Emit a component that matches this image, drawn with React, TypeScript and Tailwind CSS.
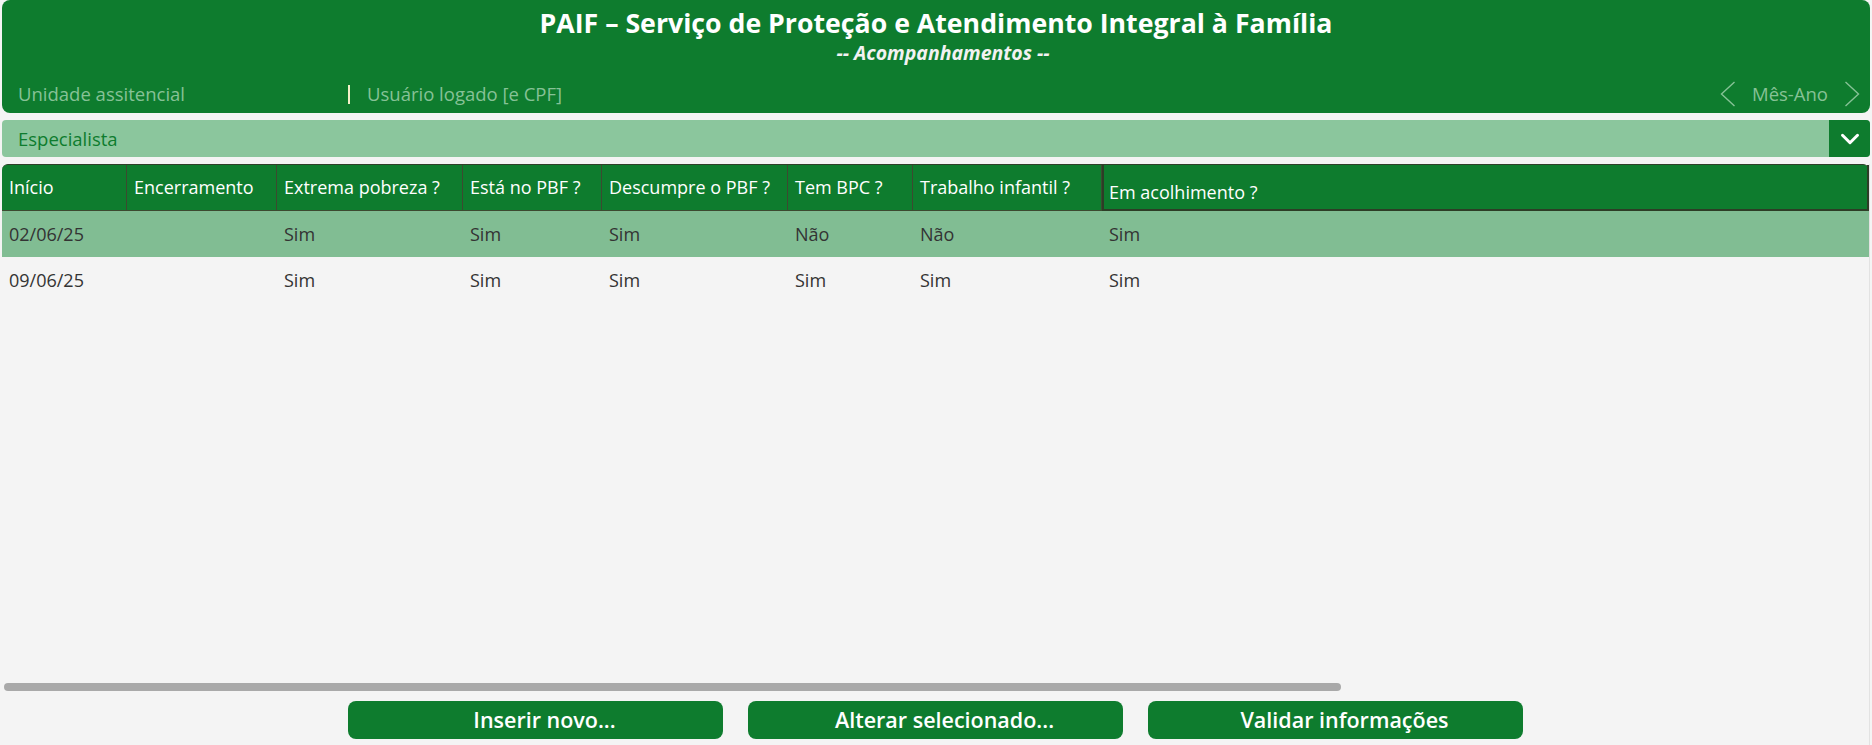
import { ChevronDown } from "lucide-react";

// Tela de acompanhamentos do PAIF (cabeçalho, filtro, grade e ações).
const columns = [
  "Início",
  "Encerramento",
  "Extrema pobreza ?",
  "Está no PBF ?",
  "Descumpre o PBF ?",
  "Tem BPC ?",
  "Trabalho infantil ?",
  "Em acolhimento ?",
];

const rows = [
  ["02/06/25", "", "Sim", "Sim", "Sim", "Não", "Não", "Sim"],
  ["09/06/25", "", "Sim", "Sim", "Sim", "Sim", "Sim", "Sim"],
];

const grid = "grid grid-cols-[125px_150px_186px_139px_186px_125px_189px_1fr]";

function Arrow({ dir }: { dir: "left" | "right" }) {
  return (
    <svg width="16" height="26" viewBox="0 0 16 26" fill="none" aria-hidden>
      <path
        d={dir === "left" ? "M14.5 1L1.5 13l13 12" : "M1.5 1l13 12-13 12"}
        stroke="currentColor"
        strokeWidth="1.4"
      />
    </svg>
  );
}

export default function App() {
  return (
    <div
      className="flex h-[745px] w-[1872px] flex-col overflow-hidden bg-[#f4f4f4] px-[2px]"
      style={{ fontFamily: "'Open Sans', 'Liberation Sans', sans-serif" }}
    >
      <header className="flex h-[113px] flex-col rounded-[8px] bg-[#0e7c2e] px-[16px]">
        <h1 className="pt-[5px] text-center text-[26.7px] font-bold leading-[35px] text-white">
          PAIF – Serviço de Proteção e Atendimento Integral à Família
        </h1>
        <div className="pl-[14px] text-center text-[19.5px] font-bold italic leading-[26px] text-[#f2f2f2]">
          -- Acompanhamentos --
        </div>
        <div className="mt-[15px] flex items-center text-[18.5px] leading-[26px] text-[#86c296]">
          <span className="w-[330px]">Unidade assitencial</span>
          <span className="mr-[17px] h-[19px] w-[2px] bg-[#f4f0c8]" />
          <span>Usuário logado [e CPF]</span>
          <div className="-mr-[6px] ml-auto flex items-center">
            <Arrow dir="left" />
            <span className="mx-[16px]">Mês-Ano</span>
            <Arrow dir="right" />
          </div>
        </div>
      </header>

      <div className="mt-[7px] flex h-[37px] items-stretch overflow-hidden rounded-[4px] bg-[#8bc69d]">
        <span className="flex flex-1 items-center px-[16px] text-[18.5px] text-[#0e7c2e]">Especialista</span>
        <button type="button" className="flex w-[41px] items-center justify-center bg-[#0e7c2e] text-white">
          <ChevronDown className="h-[30px] w-[30px]" strokeWidth={2.4} />
        </button>
      </div>

      <main className="mt-[7px] flex flex-1 flex-col border-r border-[#e2e2e2]">
        <div className={`${grid} h-[47px] rounded-t-[6px] border-t border-[#2f3f2a] bg-[#0e7c2e] text-[18px] text-white`}>
          {columns.map((c, i) =>
            i < columns.length - 1 ? (
              <div key={c} className="flex items-center border-r border-b border-[#3c4a30] px-[7px] first:rounded-tl-[6px]">
                {c}
              </div>
            ) : (
              <div key={c} className="flex items-center border-2 border-t-0 border-[#2d3d26] px-[5px] pt-[10px]">
                {c}
              </div>
            ),
          )}
        </div>

        {rows.map((r, ri) => (
          <div
            key={ri}
            className={`${grid} h-[46px] text-[18px] text-[#333] ${ri === 0 ? "bg-[#81bd93]" : ""}`}
          >
            {r.map((v, i) => (
              <div key={i} className="flex items-center px-[7px]">
                {v}
              </div>
            ))}
          </div>
        ))}

        <div className="flex-1" />
        <div className="px-[2px]">
          <div className="h-[8px] w-[1337px] rounded-full bg-[#a9a9a9]" />
        </div>

        <div className="mt-[10px] mb-[6px] flex justify-center gap-[25px]">
          {["Inserir novo...", "Alterar selecionado...", "Validar informações"].map((b) => (
            <button
              key={b}
              type="button"
              className="h-[38px] w-[375px] rounded-[8px] bg-[#0e7c2e] pl-[18px] text-[21.5px] font-semibold text-white"
            >
              {b}
            </button>
          ))}
        </div>
      </main>
    </div>
  );
}
